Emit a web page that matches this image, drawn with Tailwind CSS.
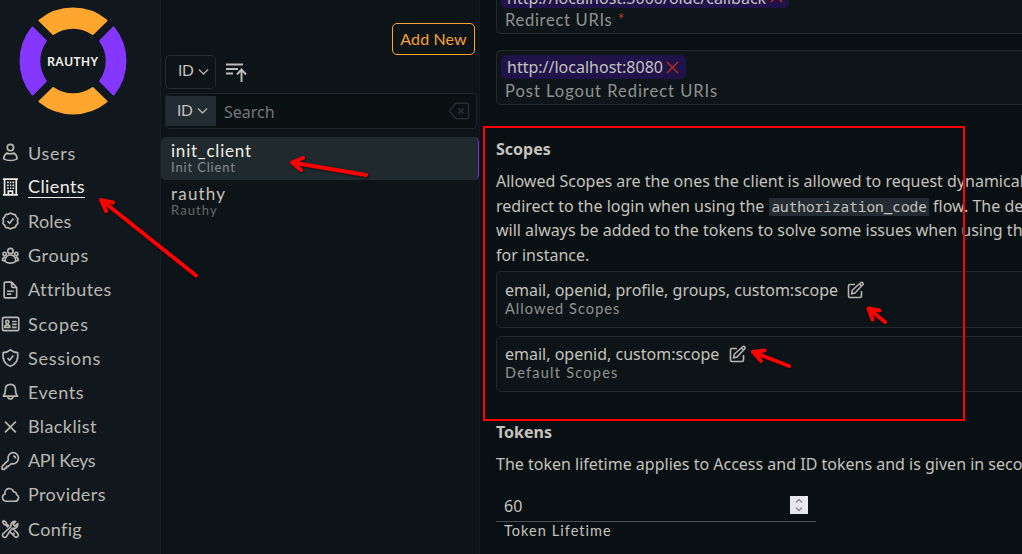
<!DOCTYPE html>
<html lang="en">
<head>
<meta charset="utf-8">
<title>Rauthy Admin</title>
<script src="https://cdn.jsdelivr.net/npm/@tailwindcss/browser@4"></script>
</head>
<body class="relative flex h-[554px] w-[1022px] overflow-hidden bg-[#091013] font-['Noto_Sans',sans-serif] text-base text-[#c6c2bd]">

<nav class="flex w-[161px] shrink-0 flex-col border-r border-[#172025] bg-[#10171d]">
  <div class="h-[136px] pl-[18px] pt-[6px]">
    <svg width="110" height="110" viewBox="18 6 110 110">
      <g stroke-width="2" stroke-linejoin="round">
        <g fill="#ffa62f" stroke="#ffa62f">
          <path d="M39.500 20.500A53 53 0 0 1 106.500 20.500L92.700 34A34 34 0 0 0 53.300 34Z"/>
          <path d="M39.500 101.500A53 53 0 0 0 106.500 101.500L92.700 88A34 34 0 0 1 53.300 88Z"/>
        </g>
        <g fill="#8637ff" stroke="#8637ff">
          <path d="M32.500 27.500A53 53 0 0 0 32.500 94.500L45.800 81A34 34 0 0 1 45.800 41Z"/>
          <path d="M113.500 27.500A53 53 0 0 1 113.500 94.500L100.200 81A34 34 0 0 0 100.200 41Z"/>
        </g>
      </g>
      <text x="47" y="65.500" textLength="51" font-family="Noto Sans" font-weight="600" font-size="12.500" fill="#f4f1ec">RAUTHY</text>
    </svg>
  </div>
  <ul class="flex flex-col font-[Lato,sans-serif] text-[18px] text-[#bab7b2] [&>li]:flex [&>li]:h-[34.2px] [&>li]:items-center [&>li]:gap-2 [&_svg]:size-5 [&_svg]:shrink-0 [&_svg]:fill-none [&_svg]:stroke-current [&_svg]:stroke-[2]">
    <li><svg viewBox="0 0 24 24"><circle cx="12.500" cy="5.500" r="3.800"/><path d="M8.500 12C6 13.500 4.500 15.500 4.500 19c2 1.300 5 2 8 2s6-.7 8-2c0-3.500-1.500-5.500-4-7-2 1.500-6 1.500-8 0Z" stroke-linejoin="round"/></svg><span class="tracking-[0.7px]">Users</span></li>
    <li class="!text-[#f0ede8]"><svg viewBox="0 0 24 24"><path d="M3.500 21.500h18M3.500 2.500h18M5.500 2.500v19M19.500 2.500v19M10 21v-4h5v4M8.500 6.500h2m1.500 0h1.500m1.500 0h2M8.500 10h2m1.500 0h1.500m1.500 0h2M8.500 13.500h2m1.500 0h1.500m1.500 0h2"/></svg><span class="h-[22px] border-b border-current leading-[21px] tracking-[0.4px]">Clients</span></li>
    <li><svg viewBox="0 0 24 24"><path d="M12.500 2.500l2.700 1.300 3 .5 1.300 2.700 2 2-.6 3 .6 3-2 2-1.300 2.700-3 .5-2.700 1.300-2.700-1.300-3-.5L5.500 17l-2-2 .6-3-.6-3 2-2 1.300-2.700 3-.5Z" stroke-linejoin="round"/><path d="m9 12 2.500 2.700L16 9"/></svg><span class="tracking-[0.2px]">Roles</span></li>
    <li><svg viewBox="0 0 24 24"><circle cx="12.500" cy="6" r="3.200"/><circle cx="5.500" cy="9.500" r="2"/><circle cx="19.500" cy="9.500" r="2"/><path d="M8 12.500c2.500-2 6.500-2 9 0 1.500 1.500 2 3.500 2 6-3.500 2.700-9.500 2.700-13 0 0-2.500.5-4.500 2-6ZM6 18c-1.300 0-2 0-3-.7 0-2.300.5-3.700 3-4.300M19 18c1.300 0 2 0 3-.7 0-2.300-.5-3.700-3-4.300"/></svg><span class="tracking-[0.6px]">Groups</span></li>
    <li><svg viewBox="0 0 24 24"><path d="M14 2.500H6.500Q5 2.500 5 4v16q0 1.500 1.500 1.500h12q1.500 0 1.500-1.500V9l-6-6.500ZM14 3v4.500Q14 9 15.500 9H20M8.500 13.500h8M8.500 17h5" stroke-linejoin="round"/></svg><span class="tracking-[0.45px]">Attributes</span></li>
    <li><svg viewBox="0 0 24 24"><rect x="3" y="4" width="19.500" height="16" rx="2"/><circle cx="8.800" cy="9.500" r="1.900"/><path d="M5.800 16q0-3 3-3t3 3ZM14.500 9H20M14.500 12.500H20M14.500 16H20"/></svg><span class="tracking-[0.85px]">Scopes</span></li>
    <li><svg viewBox="0 0 24 24"><path d="M12.500 2.300C10 4.500 7 5.500 3.800 5.500 2.800 13 5 19 12.500 22 20 19 22.200 13 21.200 5.500 18 5.500 15 4.500 12.500 2.300Z" stroke-linejoin="round"/><path d="m9 12 2.500 2.700L16 9"/></svg><span class="tracking-[0.75px]">Sessions</span></li>
    <li><svg viewBox="0 0 24 24"><path d="M12.500 2.800C8.500 2.800 6.500 5.500 6.500 9c0 4-.8 6-2.500 8h17c-1.700-2-2.500-4-2.500-8 0-3.500-2-6.200-6-6.200ZM9.500 17.500c0 4 6 4 6 0" stroke-linejoin="round"/></svg><span class="tracking-[0.55px]">Events</span></li>
    <li><svg viewBox="0 0 24 24"><path d="m6 5.500 13 13m0-13-13 13"/></svg><span class="tracking-[0.4px]">Blacklist</span></li>
    <li><svg viewBox="0 0 24 24"><path d="M15.700 6a3 3 0 0 1 3 3m3.300 0a6.500 6.500 0 0 1-7.800 6.400c-.6-.1-1.200 0-1.600.5L10 18.500H7.800v2.200H5.500V22H2.500v-3.500l7-7c.4-.4.5-1 .4-1.600A6.200 6.200 0 1 1 22 9Z" stroke-linejoin="round"/></svg><span class="tracking-[-0.35px]">API Keys</span></li>
    <li><svg viewBox="0 0 24 24"><path d="M3 15a4.500 4.500 0 0 0 4.500 4.500H18a4.200 4.200 0 0 0 1.800-8c0-2.500-2-3.800-3.500-3.300A5.300 5.300 0 0 0 6 10.700 4.500 4.500 0 0 0 3 15Z"/></svg><span class="tracking-[0.4px]">Providers</span></li>
    <li><svg viewBox="0 0 24 24"><path d="m11.500 15 6 6a2.600 2.600 0 0 0 3.700-3.700l-6-6M11.500 15l2.500-3c.4-.4 1-.7 1.500-.7 3.500.4 6.300-2 5.700-5.900l-3.200 3.200-2.400-2.400 3.200-3.200c-3-.8-6 1.500-5.700 4.600.1 1-.1 1.800-.8 2.300l-8 7.200a2.700 2.700 0 1 0 3.700 3.700L11.500 15Zm-1.700-5L6.500 6.700H5L3 3.500 4.500 2l3 2v1.500l3.500 3.400M17.500 18.500l-2-2M5.500 18.500h.1" stroke-linejoin="round"/></svg><span class="tracking-[0.35px]">Config</span></li>
  </ul>
</nav>

<section class="flex w-[319px] shrink-0 flex-col border-r border-[#10191d] bg-[#0d1417] font-[Lato,sans-serif]">
  <div class="flex justify-end pr-[4px] pt-[23px]">
    <button class="h-8 w-[83px] rounded-[5px] border border-[#ffa62f] pb-[1px] text-[16px] tracking-[0.1px] text-[#f5a136]">Add New</button>
  </div>
  <div class="flex items-center gap-[8px] pl-[4px]">
    <div class="flex h-[34px] w-[51px] items-center gap-[3px] rounded-[5px] border border-[#232c31] pb-[2px] pl-[12px]">
      <span class="w-[16px] text-[15.500px] tracking-[-0.4px]">ID</span>
      <svg class="ml-[1px] mt-[1px]" width="11" height="8" viewBox="0 0 11 8" fill="none" stroke="#b5b2ae" stroke-width="1.300"><path d="m1 1.500 4.500 4.500L10 1.500"/></svg>
    </div>
    <svg class="ml-[1px]" width="23" height="22" viewBox="0 0 23 22" fill="none" stroke="#c0bcb8" stroke-width="1.900"><path d="M1 3.500h17M1 8h12M1 12.500h7M16.500 21V9M12 13.500l4.500-5 4.500 5"/></svg>
  </div>
  <div class="ml-[4px] mt-[4px] flex h-[36px] w-[312px] items-center rounded-[5px] border border-[#1d272b] bg-[#0a1113]">
    <div class="flex h-[30px] w-[50px] items-center gap-[3px] bg-[#222c33] pb-[1px] pl-[11px]">
      <span class="w-[16px] text-[15.500px] tracking-[-0.4px]">ID</span>
      <svg class="ml-[1px] mt-[1px]" width="11" height="8" viewBox="0 0 11 8" fill="none" stroke="#b5b2ae" stroke-width="1.300"><path d="m1 1.500 4.500 4.500L10 1.500"/></svg>
    </div>
    <span class="ml-[8px] pt-[1px] font-['Noto_Sans',sans-serif] text-[#75797a]">Search</span>
    <svg class="ml-auto mr-[6px]" width="22" height="18" viewBox="0 0 22 18" fill="none" stroke="#252d30" stroke-width="1.500"><path d="M8 1.200h11q1.500 0 1.500 1.500v12.600q0 1.500-1.500 1.500H8L1.200 9Z" stroke-linejoin="round"/><path d="m10.500 6.500 5 5m0-5-5 5" stroke-width="2"/></svg>
  </div>
  <div class="mt-[8px] h-[43px] w-[318px] rounded-[5px] border-r border-[#7331e0] bg-[#1f292e] pl-[10px] pt-[4px]">
    <div class="h-[20px] text-[17px] leading-[20px] tracking-[0.78px] text-[#f0ede8]">init_client</div>
    <div class="text-[13px] leading-[13px] tracking-[0.85px] text-[#868c8f]">Init Client</div>
  </div>
  <div class="h-[43px] pl-[10px] pt-[4px]">
    <div class="h-[20px] text-[17px] leading-[20px] tracking-[1.200px]">rauthy</div>
    <div class="text-[13px] leading-[13px] tracking-[1.100px] text-[#64696b]">Rauthy</div>
  </div>
</section>

<main class="h-[554px] w-[542px] shrink-0 overflow-hidden whitespace-nowrap pl-[16px]">
  <div class="flex w-[560px] flex-col">
    <div class="flex h-[34px] flex-col rounded-b-[5px] border-b border-l border-[#212a31] bg-[#0d1519] pl-[4px]">
      <div class="flex h-[8px] w-[288px] items-end overflow-hidden rounded-b-[5px] bg-[#20134a] pl-[6px] leading-[20px]">http://localhost:3000/oidc/callback<svg class="mb-[5px] ml-[4px] shrink-0" width="13" height="13" viewBox="0 0 13 13" stroke="#b82f13" stroke-width="1.600"><path d="m1 1 11 11m0-11L1 12"/></svg></div>
      <div class="pl-[4px] font-[Lato,sans-serif] text-[16.500px] leading-[25px] tracking-[0.72px] text-[#92938f]">Redirect URIs <span class="text-[#a83a18]">*</span></div>
    </div>
    <div class="mt-[16px] flex h-[55px] flex-col rounded-l-[5px] border border-[#212a31] bg-[#0d1519] pl-[4px] pt-[4px]">
      <div class="flex h-[24px] w-[185px] shrink-0 items-center rounded-[5px] bg-[#20134a] pl-[6px]">http://localhost:8080<svg class="ml-[3px]" width="13" height="13" viewBox="0 0 13 13" stroke="#b82f13" stroke-width="1.400"><path d="m1 1 11 11m0-11L1 12"/></svg></div>
      <div class="pl-[4px] font-[Lato,sans-serif] text-[16.500px] leading-[25px] tracking-[0.98px] text-[#92938f]">Post Logout Redirect URIs</div>
    </div>
    <h2 class="mt-[32px] h-[24px] font-bold leading-[24px]">Scopes</h2>
    <p class="mt-[8px] h-[102px] leading-[24.6px]">Allowed Scopes are the ones the client is allowed to request dynamically during the<br>redirect to the login when using the <code class="mb-[1px] ml-[1px] inline-block h-[18px] bg-[#222c32] px-[2px] align-middle font-['Noto_Sans_Mono','DejaVu_Sans_Mono',monospace] text-[14.400px] leading-[17px]">authorization_code</code> flow. The default scopes<br>will always be added to the tokens to solve some issues when using the password flow<br>for instance.</p>
    <div class="flex h-[57px] flex-col rounded-l-[5px] border border-[#212a31] bg-[#0d1417] pl-[8px] pt-[6px]">
      <div class="flex h-[24px] items-center">email, openid, profile, groups, custom:scope<svg class="mb-[1px] ml-[9px]" width="18" height="18" viewBox="0 0 18 18" fill="none" stroke="#b8b5b1" stroke-width="1.600" stroke-linejoin="round"><path d="M8 3.500H3Q1.500 3.500 1.500 5v10q0 1.500 1.500 1.500h10q1.500 0 1.500-1.500v-5M4.500 13l1-4L14 1.500q2.500-.6 2 2L8 12Zm8-10 2 2"/></svg></div>
      <div class="font-[Lato,sans-serif] text-[14.500px] leading-[13px] tracking-[1.070px] text-[#92938f]">Allowed Scopes</div>
    </div>
    <div class="mt-[8px] flex h-[56px] flex-col rounded-l-[5px] border border-[#212a31] bg-[#0d1417] pl-[8px] pt-[5px]">
      <div class="flex h-[24px] items-center">email, openid, custom:scope<svg class="mb-[1px] ml-[10px]" width="18" height="18" viewBox="0 0 18 18" fill="none" stroke="#b8b5b1" stroke-width="1.600" stroke-linejoin="round"><path d="M8 3.500H3Q1.500 3.500 1.500 5v10q0 1.500 1.500 1.500h10q1.500 0 1.500-1.500v-5M4.500 13l1-4L14 1.500q2.500-.6 2 2L8 12Zm8-10 2 2"/></svg></div>
      <div class="font-[Lato,sans-serif] text-[14.500px] leading-[13px] tracking-[1.250px] text-[#92938f]">Default Scopes</div>
    </div>
    <h2 class="mt-[28px] h-[24px] font-bold leading-[24px]">Tokens</h2>
    <p class="mt-[8px] h-[24px] leading-[24px]">The token lifetime applies to Access and ID tokens and is given in seconds.</p>
    <div class="mt-[15px] flex h-[31px] w-[320px] items-center justify-between border-b border-[#4a4d4f] pl-[8px] pr-[8px]">
      <span>60</span>
      <svg class="mb-[2px]" width="18" height="18" viewBox="0 0 18 18" fill="none" stroke="#8d8d98" stroke-width="1.500"><path d="M0 0h18v18H0Z" fill="#e9e9ed" stroke="none"/><path d="m6 6.500 3-3 3 3M6 11.500l3 3 3-3"/></svg>
    </div>
    <div class="pl-[8px] font-[Lato,sans-serif] text-[14.500px] leading-[18px] tracking-[1.050px]">Token Lifetime</div>
  </div>
</main>

<div class="pointer-events-none absolute left-[483px] top-[126px] h-[295px] w-[482px] border-2 border-[#fd0000]"></div>
<svg class="pointer-events-none absolute left-0 top-0 drop-shadow-[1px_1px_1px_rgba(0,0,0,0.6)]" width="1022" height="554" fill="none" stroke="#fd0000" stroke-width="4" stroke-linecap="round" stroke-linejoin="round">
  <path d="M196 275.500 102 200.500M113 202.500 101 200l5 11"/>
  <path d="M366 175 292 162.500M303 158l-11 4.500 9 7.500"/>
  <path d="M885 322 868.500 308.500M879.500 310.500l-11-2 4 11"/>
  <path d="M789 366 753 352M764.500 350.500 753 352l8 9"/>
</svg>
</body>
</html>
